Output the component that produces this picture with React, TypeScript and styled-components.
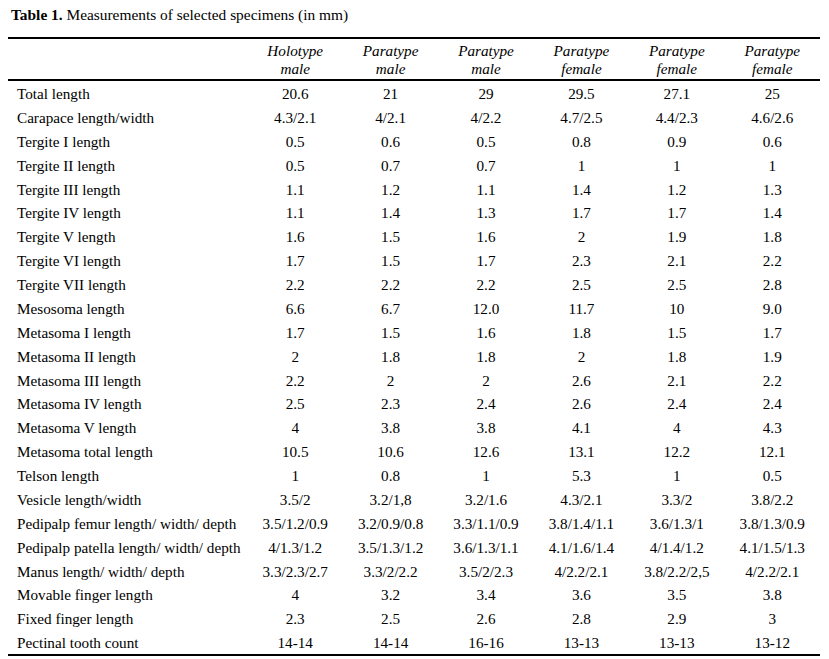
import React from "react";
import styled, { createGlobalStyle } from "styled-components";

const Global = createGlobalStyle`
  html, body { background: #ffffff; }
  body {
    margin: 8px;
    font-family: "Liberation Serif", "Times New Roman", serif;
    color: #000000;
  }
`;

const Wrapper = styled.div`
  width: 812px;
`;

const Caption = styled.div`
  font-size: 15.4px;
  line-height: 14px;
  padding-left: 3px;
  margin-bottom: 15px;
  white-space: nowrap;
`;

const CaptionLabel = styled.span`
  font-weight: bold;
`;

const Table = styled.table`
  width: 812px;
  border-collapse: collapse;
  table-layout: fixed;
  font-size: 15.2px;
`;

const HeadRow = styled.tr`
  border-top: 2px solid #000;
  border-bottom: 2px solid #000;
`;

const HeadCell = styled.th`
  font-weight: normal;
  font-style: italic;
  text-align: center;
  line-height: 18px;
  padding: 3px 0 1px;
  vertical-align: middle;
`;

const BodyRow = styled.tr<{ $last?: boolean }>`
  height: 23.875px;
  border-bottom: ${(p) => (p.$last ? "2px solid #000" : "none")};
`;

const LabelCell = styled.td`
  padding: 3px 0 0 9px;
  line-height: 20.875px;
  white-space: nowrap;
  text-align: left;
`;

const ValueCell = styled.td`
  padding: 3px 0 0;
  line-height: 20.875px;
  text-align: center;
  white-space: nowrap;
`;

const headers: [string, string][] = [
  ["Holotype", "male"],
  ["Paratype", "male"],
  ["Paratype", "male"],
  ["Paratype", "female"],
  ["Paratype", "female"],
  ["Paratype", "female"],
];

const rows: [string, string[]][] = [
  ["Total length", ["20.6", "21", "29", "29.5", "27.1", "25"]],
  ["Carapace length/width", ["4.3/2.1", "4/2.1", "4/2.2", "4.7/2.5", "4.4/2.3", "4.6/2.6"]],
  ["Tergite I length", ["0.5", "0.6", "0.5", "0.8", "0.9", "0.6"]],
  ["Tergite II length", ["0.5", "0.7", "0.7", "1", "1", "1"]],
  ["Tergite III length", ["1.1", "1.2", "1.1", "1.4", "1.2", "1.3"]],
  ["Tergite IV length", ["1.1", "1.4", "1.3", "1.7", "1.7", "1.4"]],
  ["Tergite V length", ["1.6", "1.5", "1.6", "2", "1.9", "1.8"]],
  ["Tergite VI length", ["1.7", "1.5", "1.7", "2.3", "2.1", "2.2"]],
  ["Tergite VII length", ["2.2", "2.2", "2.2", "2.5", "2.5", "2.8"]],
  ["Mesosoma length", ["6.6", "6.7", "12.0", "11.7", "10", "9.0"]],
  ["Metasoma I length", ["1.7", "1.5", "1.6", "1.8", "1.5", "1.7"]],
  ["Metasoma II length", ["2", "1.8", "1.8", "2", "1.8", "1.9"]],
  ["Metasoma III length", ["2.2", "2", "2", "2.6", "2.1", "2.2"]],
  ["Metasoma IV length", ["2.5", "2.3", "2.4", "2.6", "2.4", "2.4"]],
  ["Metasoma V length", ["4", "3.8", "3.8", "4.1", "4", "4.3"]],
  ["Metasoma total length", ["10.5", "10.6", "12.6", "13.1", "12.2", "12.1"]],
  ["Telson length", ["1", "0.8", "1", "5.3", "1", "0.5"]],
  ["Vesicle length/width", ["3.5/2", "3.2/1,8", "3.2/1.6", "4.3/2.1", "3.3/2", "3.8/2.2"]],
  ["Pedipalp femur length/ width/ depth", ["3.5/1.2/0.9", "3.2/0.9/0.8", "3.3/1.1/0.9", "3.8/1.4/1.1", "3.6/1.3/1", "3.8/1.3/0.9"]],
  ["Pedipalp patella length/ width/ depth", ["4/1.3/1.2", "3.5/1.3/1.2", "3.6/1.3/1.1", "4.1/1.6/1.4", "4/1.4/1.2", "4.1/1.5/1.3"]],
  ["Manus length/ width/ depth", ["3.3/2.3/2.7", "3.3/2/2.2", "3.5/2/2.3", "4/2.2/2.1", "3.8/2.2/2,5", "4/2.2/2.1"]],
  ["Movable finger length", ["4", "3.2", "3.4", "3.6", "3.5", "3.8"]],
  ["Fixed finger length", ["2.3", "2.5", "2.6", "2.8", "2.9", "3"]],
  ["Pectinal tooth count", ["14-14", "14-14", "16-16", "13-13", "13-13", "13-12"]],
];

export default function App() {
  return (
    <>
      <Global />
      <Wrapper>
        <Caption>
          <CaptionLabel>Table 1.</CaptionLabel> Measurements of selected specimens (in mm)
        </Caption>
        <Table>
          <colgroup>
            <col style={{ width: "239.5px" }} />
            {headers.map((_, i) => (
              <col key={i} />
            ))}
          </colgroup>
          <thead>
            <HeadRow>
              <HeadCell />
              {headers.map(([a, b], i) => (
                <HeadCell key={i}>
                  {a}
                  <br />
                  {b}
                </HeadCell>
              ))}
            </HeadRow>
          </thead>
          <tbody>
            {rows.map(([label, vals], i) => (
              <BodyRow key={i} $last={i === rows.length - 1}>
                <LabelCell>{label}</LabelCell>
                {vals.map((v, j) => (
                  <ValueCell key={j}>{v}</ValueCell>
                ))}
              </BodyRow>
            ))}
          </tbody>
        </Table>
      </Wrapper>
    </>
  );
}
